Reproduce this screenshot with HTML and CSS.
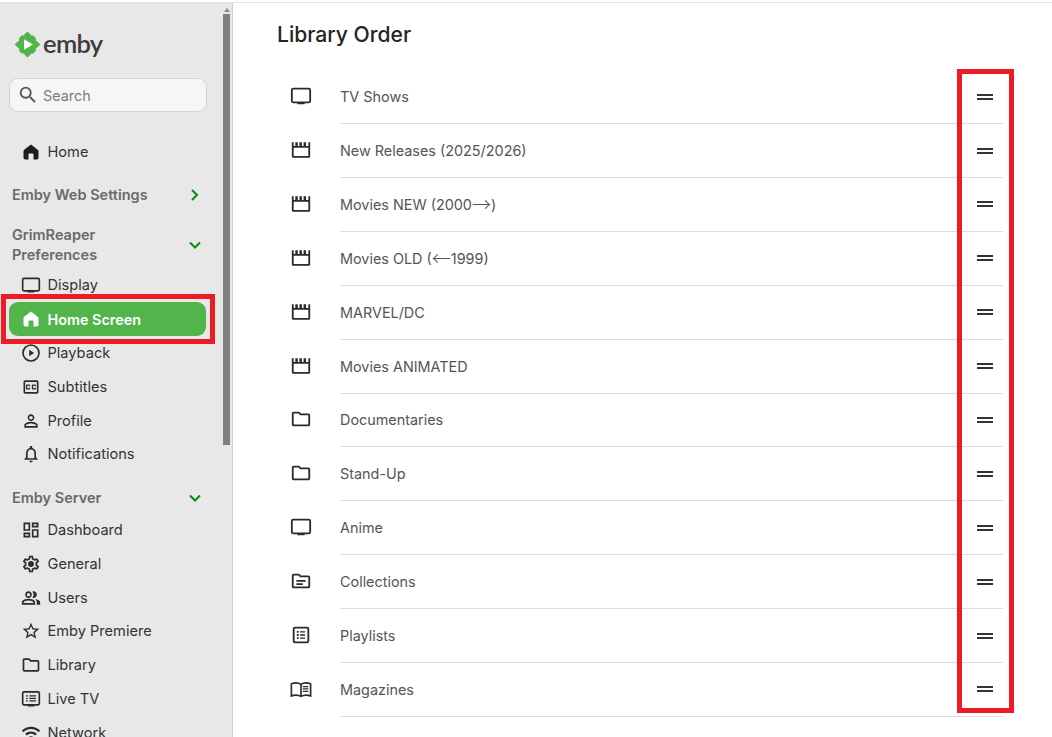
FILE: index.html
```html
<!DOCTYPE html>
<html lang="en">
<head>
<meta charset="utf-8">
<title>Library Order</title>
<link rel="stylesheet" href="styles.css">
</head>
<body>
<svg class="defs" width="0" height="0" aria-hidden="true">
  <symbol id="i-home" viewBox="0 0 24 24"><path fill="currentColor" d="M12 3 3.4 9.6A2 2 0 0 0 3 10.8V19a2 2 0 0 0 2 2h4v-6.2a1 1 0 0 1 1-1h4a1 1 0 0 1 1 1V21h4a2 2 0 0 0 2-2v-8.2a2 2 0 0 0-.6-1.3z"/></symbol>
  <symbol id="i-tv" viewBox="0 0 24 24"><rect x="2" y="4" width="20" height="15" rx="1.6" fill="none" stroke="currentColor" stroke-width="2"/><rect x="8" y="19" width="8" height="2" fill="currentColor"/></symbol>
  <symbol id="i-play" viewBox="0 0 24 24"><circle cx="12" cy="12" r="9.6" fill="none" stroke="currentColor" stroke-width="2"/><path fill="currentColor" d="M9.8 8v8l6-4z"/></symbol>
  <symbol id="i-cc" viewBox="0 0 24 24"><path fill="currentColor" d="M19 4H5c-1.11 0-2 .9-2 2v12c0 1.1.89 2 2 2h14c1.1 0 2-.9 2-2V6c0-1.1-.9-2-2-2zm0 14H5V6h14v12zM7 15h3c.55 0 1-.45 1-1v-1H9.5v.5h-2v-3h2v.5H11v-1c0-.55-.45-1-1-1H7c-.55 0-1 .45-1 1v4c0 .55.45 1 1 1zm7 0h3c.55 0 1-.45 1-1v-1h-1.5v.5h-2v-3h2v.5H18v-1c0-.55-.45-1-1-1h-3c-.55 0-1 .45-1 1v4c0 .55.45 1 1 1z"/></symbol>
  <symbol id="i-person" viewBox="0 0 24 24"><path fill="currentColor" d="M12 5.9c1.16 0 2.1.94 2.1 2.1s-.94 2.1-2.1 2.1S9.9 9.16 9.9 8s.94-2.1 2.1-2.1m0 9c2.97 0 6.1 1.46 6.1 2.1v1.1H5.9V17c0-.64 3.13-2.1 6.1-2.1M12 4C9.79 4 8 5.79 8 8s1.79 4 4 4 4-1.79 4-4-1.79-4-4-4zm0 9c-2.67 0-8 1.34-8 4v3h16v-3c0-2.66-5.33-4-8-4z"/></symbol>
  <symbol id="i-bell" viewBox="0 0 24 24"><path fill="currentColor" d="M12 22c1.1 0 2-.9 2-2h-4c0 1.1.9 2 2 2zm6-6v-5c0-3.07-1.63-5.64-4.5-6.32V4c0-.83-.67-1.5-1.5-1.5s-1.5.67-1.5 1.5v.68C7.64 5.36 6 7.92 6 11v5l-2 2v1h16v-1l-2-2zm-2 1H8v-6c0-2.48 1.51-4.5 4-4.5s4 2.02 4 4.5v6z"/></symbol>
  <symbol id="i-dash" viewBox="0 0 24 24"><path fill="currentColor" d="M19 5v2h-4V5h4M9 5v6H5V5h4m10 8v6h-4v-6h4M9 17v2H5v-2h4M21 3h-8v6h8V3zM11 3H3v10h8V3zm10 8h-8v10h8V11zm-10 4H3v6h8v-6z"/></symbol>
  <symbol id="i-gear" viewBox="0 0 24 24"><path fill="currentColor" d="M19.43 12.98c.04-.32.07-.64.07-.98 0-.34-.03-.66-.07-.98l2.11-1.65c.19-.15.24-.42.12-.64l-2-3.46c-.09-.16-.26-.25-.44-.25-.06 0-.12.01-.17.03l-2.49 1c-.52-.4-1.08-.73-1.69-.98l-.38-2.65C14.46 2.18 14.25 2 14 2h-4c-.25 0-.46.18-.49.42l-.38 2.65c-.61.25-1.17.59-1.69.98l-2.49-1c-.06-.02-.12-.03-.18-.03-.17 0-.34.09-.43.25l-2 3.46c-.13.22-.07.49.12.64l2.11 1.65c-.04.32-.07.65-.07.98 0 .33.03.66.07.98l-2.11 1.65c-.19.15-.24.42-.12.64l2 3.46c.09.16.26.25.44.25.06 0 .12-.01.17-.03l2.49-1c.52.4 1.08.73 1.69.98l.38 2.65c.03.24.24.42.49.42h4c.25 0 .46-.18.49-.42l.38-2.65c.61-.25 1.17-.59 1.69-.98l2.49 1c.06.02.12.03.18.03.17 0 .34-.09.43-.25l2-3.46c.12-.22.07-.49-.12-.64l-2.11-1.65zm-1.98-1.71c.04.31.05.52.05.73 0 .21-.02.43-.05.73l-.14 1.13.89.7 1.08.84-.7 1.21-1.27-.51-1.04-.42-.9.68c-.43.32-.84.56-1.25.73l-1.06.43-.16 1.13-.2 1.35h-1.4l-.19-1.35-.16-1.13-1.06-.43c-.43-.18-.83-.41-1.23-.71l-.91-.7-1.06.43-1.27.51-.7-1.21 1.08-.84.89-.7-.14-1.13c-.03-.31-.05-.54-.05-.74s.02-.43.05-.73l.14-1.13-.89-.7-1.08-.84.7-1.21 1.27.51 1.04.42.9-.68c.43-.32.84-.56 1.25-.73l1.06-.43.16-1.13.2-1.35h1.39l.19 1.35.16 1.13 1.06.43c.43.18.83.41 1.23.71l.91.7 1.06-.43 1.27-.51.7 1.21-1.07.85-.89.7.14 1.13zM12 8.5a3.5 3.5 0 1 0 0 7 3.5 3.5 0 0 0 0-7z"/></symbol>
  <symbol id="i-users" viewBox="0 0 24 24"><path fill="currentColor" d="M16.67 13.13C18.04 14.06 19 15.32 19 17v3h4v-3c0-2.18-3.57-3.47-6.33-3.87zM15 12c2.21 0 4-1.79 4-4s-1.79-4-4-4c-.47 0-.91.1-1.33.24C14.5 5.27 15 6.58 15 8s-.5 2.73-1.33 3.76c.42.14.86.24 1.33.24zM9 12c2.21 0 4-1.79 4-4s-1.79-4-4-4-4 1.79-4 4 1.79 4 4 4zm0-6c1.1 0 2 .9 2 2s-.9 2-2 2-2-.9-2-2 .9-2 2-2zM9 13c-2.67 0-8 1.34-8 4v3h16v-3c0-2.66-5.33-4-8-4zm6 5H3v-.99C3.2 16.29 6.3 15 9 15s5.8 1.29 6 2v1z"/></symbol>
  <symbol id="i-star" viewBox="0 0 24 24"><path fill="currentColor" d="M22 9.24l-7.19-.62L12 2 9.19 8.63 2 9.24l5.46 4.73L5.82 21 12 17.27 18.18 21l-1.63-7.03L22 9.24zM12 15.4l-3.76 2.27 1-4.28-3.32-2.88 4.38-.38L12 6.1l1.71 4.04 4.38.38-3.32 2.88 1 4.28L12 15.4z"/></symbol>
  <symbol id="i-folder" viewBox="0 0 24 24"><path fill="currentColor" d="M9.17 6l2 2H20v10H4V6h5.17M10 4H4c-1.1 0-1.99.9-1.99 2L2 18c0 1.1.9 2 2 2h16c1.1 0 2-.9 2-2V8c0-1.1-.9-2-2-2h-8l-2-2z"/></symbol>
  <symbol id="i-livetv" viewBox="0 0 24 24"><rect x="2" y="3.5" width="20" height="15.5" rx="1.6" fill="none" stroke="currentColor" stroke-width="2"/><rect x="8" y="19" width="8" height="2" fill="currentColor"/><path fill="currentColor" d="M6 7.5h2v1.6H6zM10 7.5h8v1.6h-8zM6 10.5h2v1.6H6zM10 10.5h8v1.6h-8zM6 13.5h2v1.6H6zM10 13.5h8v1.6h-8z"/></symbol>
  <symbol id="i-wifi" viewBox="0 0 24 24"><path fill="currentColor" d="M1 9l2 2c4.97-4.97 13.03-4.97 18 0l2-2C16.93 2.93 7.07 2.93 1 9zm8 8l3 3 3-3c-1.65-1.66-4.34-1.66-6 0zm-4-4l2 2c2.76-2.76 7.24-2.76 10 0l2-2C15.14 9.14 8.87 9.14 5 13z"/></symbol>
  <symbol id="i-movie" viewBox="0 0 24 24"><path fill="currentColor" d="M2 3.500h2v4h1.800v-4h2.700v4h1.800v-4h2.700v4h1.800v-4h2.700v4H20v-4h2V19a1.500 1.500 0 0 1-1.500 1.500h-17A1.500 1.500 0 0 1 2 19zm2 6v9h16v-9z"/></symbol>
  <symbol id="i-coll" viewBox="0 0 24 24"><path fill="currentColor" d="M9.170 6l2 2H20v10H4V6h5.170M10 4H4c-1.100 0-1.990.9-1.990 2L2 18c0 1.100.9 2 2 2h16c1.100 0 2-.9 2-2V8c0-1.100-.9-2-2-2h-8l-2-2zM7 11h10v1.800H7zM7 14.500h7v1.800H7z"/></symbol>
  <symbol id="i-list" viewBox="0 0 24 24"><rect x="4" y="4" width="16" height="16" rx="1.500" fill="none" stroke="currentColor" stroke-width="2"/><path fill="currentColor" d="M7.500 7.600h2v2h-2zM11 7.800h5.500v1.600H11zM7.500 11h2v2h-2zM11 11.200h5.500v1.600H11zM7.500 14.400h2v2h-2zM11 14.600h5.500v1.600H11z"/></symbol>
  <symbol id="i-book" viewBox="0 0 24 24"><path fill="none" stroke="currentColor" stroke-width="1.800" d="M12 7C10.500 5.800 8.500 5.300 6.500 5.300S2.900 5.600 1.500 6.400v13.200c1.400-.7 3-1 5-1s3.900.5 5.500 1.500c1.600-1 3.500-1.500 5.500-1.500s3.600.3 5 1V6.400c-1.400-.8-3-1.100-5-1.100S13.500 5.800 12 7zm0 0v12"/><path fill="currentColor" d="M14 8.600h6v1.400h-6zM14 11.200h6v1.400h-6zM14 13.800h6v1.400h-6z"/></symbol>
</svg>

<div class="app">
  <aside class="sidebar">
    <div class="logo">
      <svg class="logo-mark" viewBox="0 0 28 28" aria-hidden="true">
        <path fill="#52b54b" d="M14 .5 18.500 5l1.500-.5L23 8l-.5 1.500 5 4.500-5 4.500.5 1.500-3 3.500-1.500-.5-4.500 4.500L9.500 23 8 23.500 5 20l.5-1.500L.5 14l5-4.500L5 8l3-3.500L9.500 5z"/>
        <path fill="#fff" d="M10.500 8.500v11l9-5.500z"/>
      </svg>
      <span class="logo-text">emby</span>
    </div>
    <div class="search">
      <svg class="search-icon" viewBox="0 0 24 24" aria-hidden="true"><path fill="currentColor" d="M15.500 14h-.79l-.28-.27A6.471 6.471 0 0 0 16 9.500 6.500 6.500 0 1 0 9.500 16c1.610 0 3.090-.59 4.230-1.570l.27.28v.79l5 4.990L20.490 19l-4.990-5zm-6 0C7.010 14 5 11.990 5 9.500S7.010 5 9.500 5 14 7.010 14 9.500 11.990 14 9.500 14z"/></svg>
      <span>Search</span>
    </div>
    <nav class="nav">
      <a class="nav-item"><svg class="nav-icon"><use href="#i-home"/></svg>Home</a>
      <div class="nav-head nav-head-closed">
        <span>Emby Web Settings</span>
        <svg class="chev" viewBox="0 0 12 12"><path d="M3 1 8 6 3 11"/></svg>
      </div>
      <div class="nav-head nav-head-wrapped">
        <span>GrimReaper<br>Preferences</span>
        <svg class="chev" viewBox="0 0 12 12"><path d="M1 3.500 6 8.500 11 3.500"/></svg>
      </div>
      <a class="nav-item"><svg class="nav-icon"><use href="#i-tv"/></svg>Display</a>
      <a class="nav-item active"><svg class="nav-icon"><use href="#i-home"/></svg>Home Screen</a>
      <a class="nav-item"><svg class="nav-icon"><use href="#i-play"/></svg>Playback</a>
      <a class="nav-item"><svg class="nav-icon"><use href="#i-cc"/></svg>Subtitles</a>
      <a class="nav-item"><svg class="nav-icon"><use href="#i-person"/></svg>Profile</a>
      <a class="nav-item"><svg class="nav-icon"><use href="#i-bell"/></svg>Notifications</a>
      <div class="nav-head nav-head-server">
        <span>Emby Server</span>
        <svg class="chev" viewBox="0 0 12 12"><path d="M1 3.500 6 8.500 11 3.500"/></svg>
      </div>
      <a class="nav-item"><svg class="nav-icon"><use href="#i-dash"/></svg>Dashboard</a>
      <a class="nav-item"><svg class="nav-icon"><use href="#i-gear"/></svg>General</a>
      <a class="nav-item"><svg class="nav-icon"><use href="#i-users"/></svg>Users</a>
      <a class="nav-item"><svg class="nav-icon"><use href="#i-star"/></svg>Emby Premiere</a>
      <a class="nav-item"><svg class="nav-icon"><use href="#i-folder"/></svg>Library</a>
      <a class="nav-item"><svg class="nav-icon"><use href="#i-livetv"/></svg>Live TV</a>
      <a class="nav-item"><svg class="nav-icon"><use href="#i-wifi"/></svg>Network</a>
    </nav>
    <div class="scrollbar">
      <span class="scroll-arrow"></span>
      <span class="scroll-thumb"></span>
    </div>
  </aside>

  <main class="main">
    <h1 class="title">Library Order</h1>
    <ul class="rows">
      <li class="row"><svg class="row-icon"><use href="#i-tv"/></svg><div class="row-body"><span>TV Shows</span><span class="handle"></span></div></li>
      <li class="row"><svg class="row-icon"><use href="#i-movie"/></svg><div class="row-body"><span>New Releases (2025/2026)</span><span class="handle"></span></div></li>
      <li class="row"><svg class="row-icon"><use href="#i-movie"/></svg><div class="row-body"><span>Movies NEW (2000<span class="arrow">→</span>)</span><span class="handle"></span></div></li>
      <li class="row"><svg class="row-icon"><use href="#i-movie"/></svg><div class="row-body"><span>Movies OLD (<span class="arrow">←</span>1999)</span><span class="handle"></span></div></li>
      <li class="row"><svg class="row-icon"><use href="#i-movie"/></svg><div class="row-body"><span>MARVEL/DC</span><span class="handle"></span></div></li>
      <li class="row"><svg class="row-icon"><use href="#i-movie"/></svg><div class="row-body"><span>Movies ANIMATED</span><span class="handle"></span></div></li>
      <li class="row"><svg class="row-icon"><use href="#i-folder"/></svg><div class="row-body"><span>Documentaries</span><span class="handle"></span></div></li>
      <li class="row"><svg class="row-icon"><use href="#i-folder"/></svg><div class="row-body"><span>Stand-Up</span><span class="handle"></span></div></li>
      <li class="row"><svg class="row-icon"><use href="#i-tv"/></svg><div class="row-body"><span>Anime</span><span class="handle"></span></div></li>
      <li class="row"><svg class="row-icon"><use href="#i-coll"/></svg><div class="row-body"><span>Collections</span><span class="handle"></span></div></li>
      <li class="row"><svg class="row-icon"><use href="#i-list"/></svg><div class="row-body"><span>Playlists</span><span class="handle"></span></div></li>
      <li class="row"><svg class="row-icon"><use href="#i-book"/></svg><div class="row-body"><span>Magazines</span><span class="handle"></span></div></li>
    </ul>
  </main>
</div>

<div class="mark mark-nav"></div>
<div class="mark mark-handles"></div>
</body>
</html>
```

FILE: styles.css
```css
* { box-sizing: border-box; }
html, body { margin: 0; height: 100%; overflow: hidden; background: #fff; }
body { font-family: Inter, "Liberation Sans", sans-serif; color: #222; position: relative; }
.defs { position: absolute; }

.app { display: flex; height: 737px; padding-top: 3px; background: linear-gradient(#e2e2e2, #e2e2e2) 0 2px / 100% 1px no-repeat #fff; }

/* sidebar */
.sidebar { position: relative; flex: 0 0 233px; background: #e8e8e8; border-right: 1px solid #cfcfcf; overflow: hidden; padding-top: 27px; }
.logo { display: flex; align-items: center; margin-left: 14px; height: 28px; }
.logo-mark { width: 27px; height: 27px; }
.logo-text { margin-left: 2px; position: relative; top: -1px; font: 600 25.6px/28px Lato, Inter, sans-serif; letter-spacing: -.7px; color: #3c3c3c; }
.search { display: flex; align-items: center; width: 198px; height: 34px; margin: 20.4px 0 0 9px; padding-left: 7px; border: 1px solid #d4d4d4; border-radius: 9px; background: #f6f6f6; color: #7d7d7d; font-size: 14.4px; }
.search-icon { width: 22px; height: 22px; margin-right: 4px; color: #555; }

.nav { margin-top: 22.6px; }
.nav-item { display: flex; align-items: center; width: 197px; height: 33.8px; margin-left: 9px; padding-left: 12px; border-radius: 9px; font-size: 14.6px; color: #333; }
.nav-icon { width: 20px; height: 20px; margin-right: 6.5px; flex: none; color: #2b2b2b; }
.nav-item:first-child .nav-icon { color: #1c1c1c; }
.nav-item.active { background: #52b54b; color: #fff; font-weight: 600; font-size: 14.4px; }
.nav-item.active .nav-icon { color: #fff; }

.nav-head { display: flex; align-items: center; justify-content: space-between; width: 200px; padding-right: 11px; font-size: 14.5px; line-height: 20px; font-weight: 600; color: #6a6a6a; }
.nav-head-closed { margin: 16px 0 0 12px; }
.nav-head-wrapped { margin: 20px 0 3.7px 12px; }
.nav-head-server { margin: 16.4px 0 5.5px 12px; }
.chev { width: 12px; height: 12px; fill: none; stroke: #0b8a0b; stroke-width: 2; }

.scrollbar { position: absolute; top: 0; right: 2px; width: 7px; height: 100%; }
.scroll-arrow { display: block; width: 0; margin: 5px auto 0; border: 3px solid transparent; border-top: 0; border-bottom: 4px solid #8a8a8a; }
.scroll-thumb { display: block; height: 431px; margin-top: 2px; background: #808080; }

/* main */
.main { flex: 1; min-width: 0; padding: 0 49px 0 44px; }
.title { margin: 18px 0 0; font-size: 21.1px; line-height: 28px; font-weight: 500; color: #242424; }
.rows { list-style: none; margin: 21.2px 0 0; padding: 0; }
.row { display: flex; align-items: center; height: 53.9px; }
.row-icon { width: 22px; height: 22px; margin: 0 0 0 13px; flex: none; color: #2b2b2b; position: relative; top: -1px; }
.row-body { flex: 1; height: 100%; margin-left: 28px; display: flex; align-items: center; justify-content: space-between; border-bottom: 1px solid #dcdcdc; font-size: 14.4px; color: #555; }
.arrow { font-family: "Noto Sans CJK SC", "DejaVu Sans", sans-serif; font-size: 19px; font-weight: 300; line-height: 0; vertical-align: -2px; }
.handle { width: 16px; height: 6px; margin-right: 10px; border-top: 2px solid #333; border-bottom: 2px solid #333; }

/* red annotations drawn over the screenshot */
.mark { position: absolute; border: 5px solid #ed1c24; pointer-events: none; }
.mark-nav { left: 1px; top: 294px; width: 214px; height: 50px; }
.mark-handles { left: 957px; top: 69px; width: 57px; height: 644px; }
```
